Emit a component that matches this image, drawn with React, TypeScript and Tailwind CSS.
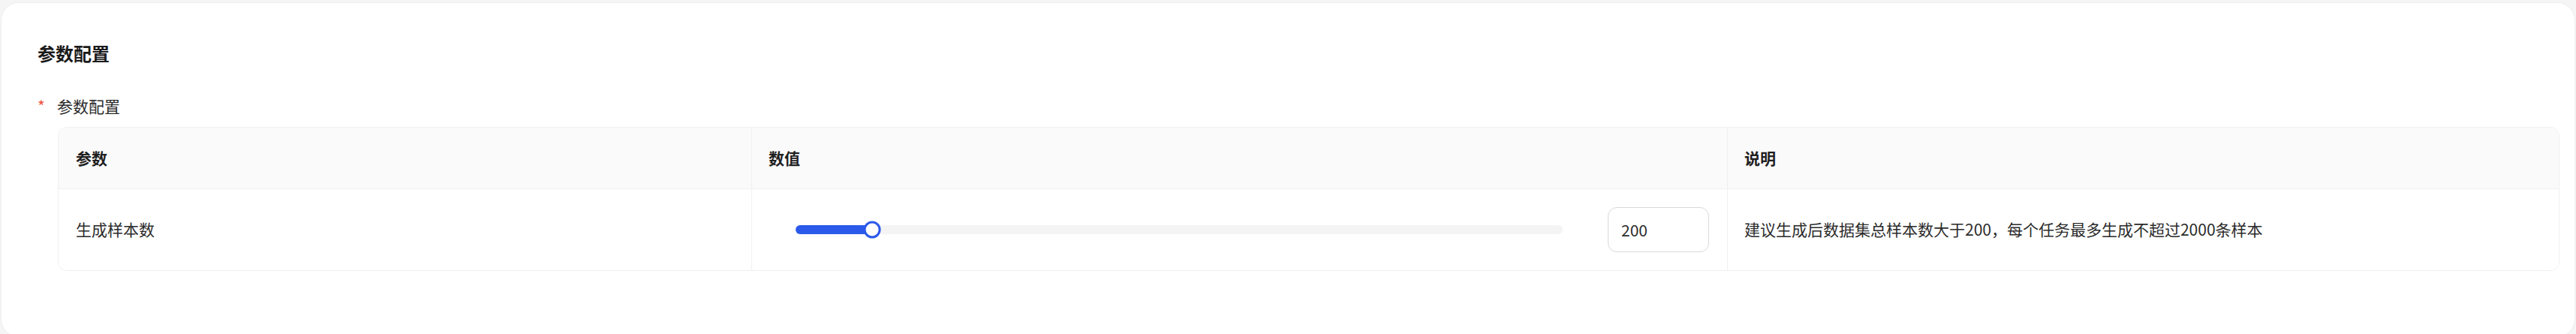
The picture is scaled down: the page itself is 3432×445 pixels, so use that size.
import React from 'react';

const font = { fontFamily: '"Noto Sans CJK SC", "Noto Sans", sans-serif' };

function SampleSlider({ value, max }: { value: number; max: number }) {
  const pct = value / max;
  const trackWidth = 1022;
  const pos = Math.round(pct * trackWidth);
  return (
    <div className="relative w-[1022px] h-[12px] rounded-full bg-[#f4f4f4]">
      <div className="absolute left-0 top-0 h-[12px] rounded-full bg-[#2b59ea]" style={{ width: pos }} />
      <div
        className="absolute top-1/2 -translate-y-1/2 -translate-x-1/2 w-[23px] h-[23px] rounded-full border-[3px] border-[#2b59ea] bg-white"
        style={{ left: pos }}
      />
    </div>
  );
}

export default function App() {
  return (
    <div className="w-[3432px] h-[445px] overflow-hidden bg-[#f5f5f5] pt-[3px] px-[1px]" style={font}>
      <div className="h-[446px] rounded-[24px] bg-white border border-[#eeeeee] pl-[48px] pr-[20px] pt-[51px]">
        <div className="text-[24px] leading-[32px] font-bold text-[#1a1a1a]">参数配置</div>

        <div className="mt-[39px] flex items-center h-[32px] text-[21px] text-[#2b2b2b]">
          <span className="w-[26px] text-[#f5543f]">*</span>
          <span>参数配置</span>
        </div>

        <div className="mt-[11px] ml-[27px] border border-[#f0f0f0] rounded-[12px] overflow-hidden text-[21px]">
          <div className="grid grid-cols-[924px_1300px_1fr] bg-[#fafafa] border-b border-[#f0f0f0] h-[82px] font-bold text-[#1f1f1f]">
            <div className="flex items-center pl-[23px] border-r border-[#f0f0f0]">参数</div>
            <div className="flex items-center pl-[22px] border-r border-[#f0f0f0]">数值</div>
            <div className="flex items-center pl-[22px]">说明</div>
          </div>
          <div className="grid grid-cols-[924px_1300px_1fr] h-[108px] bg-white text-[#2b2b2b]">
            <div className="flex items-center pl-[23px] border-r border-[#f0f0f0]">生成样本数</div>
            <div className="flex items-center pl-[58px] pr-[24px] justify-between border-r border-[#f0f0f0]">
              <SampleSlider value={200} max={2000} />
              <input
                className="w-[135px] h-[60px] border border-[#d9d9d9] rounded-[12px] pl-[17px] text-[21px] text-[#2b2b2b] outline-none bg-white"
                defaultValue="200"
                style={font}
              />
            </div>
            <div className="flex items-center pl-[22px]">建议生成后数据集总样本数大于200，每个任务最多生成不超过2000条样本</div>
          </div>
        </div>
      </div>
    </div>
  );
}
